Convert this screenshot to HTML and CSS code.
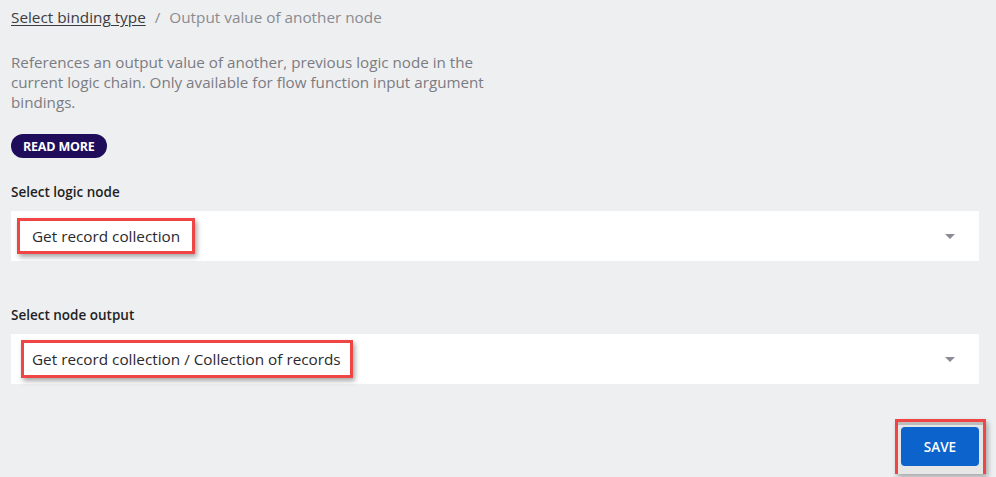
FILE: index.html
```html
<!DOCTYPE html>
<html>
<head>
<meta charset="utf-8">
<link rel="stylesheet" href="styles.css">
</head>
<body>
<div class="page">
  <nav class="breadcrumb">
    <a class="crumb-link" href="#">Select binding type</a>
    <span class="crumb-sep">/</span>
    <span class="crumb-current">Output value of another node</span>
  </nav>
  <p class="desc">References an output value of another, previous logic node in the current logic chain. Only available for flow function input argument bindings.</p>
  <button class="read-more">READ MORE</button>

  <div class="field field-first">
    <div class="label">Select logic node</div>
    <div class="select">
      <span class="mark mark-1">Get record collection</span>
      <span class="caret"></span>
    </div>
  </div>

  <div class="field field-second">
    <div class="label">Select node output</div>
    <div class="select">
      <span class="mark mark-2">Get record collection / Collection of records</span>
      <span class="caret"></span>
    </div>
  </div>

  <div class="footer">
    <span class="mark-save"><button class="save">SAVE</button></span>
  </div>
</div>
</body>
</html>
```

FILE: styles.css
```css
* { box-sizing: border-box; }
html, body {
  margin: 0;
  padding: 0;
  background: #eeeff1;
  height: 477px;
  overflow: hidden;
}
body {
  font-family: "Open Sans", Lato, sans-serif;
  color: #222;
}
.page {
  padding: 7px 17px 0 11px;
  display: flex;
  flex-direction: column;
  align-items: flex-start;
}
.breadcrumb {
  font-size: 15.3px;
  line-height: 20px;
  color: #8a8b90;
  display: flex;
  gap: 9px;
}
.crumb-link {
  color: #3b3c42;
  text-decoration: underline;
  text-underline-offset: 2px;
}
.crumb-sep { color: #8a8b90; }
.desc {
  margin: 25px 0 0;
  width: 490px;
  font-size: 15.2px;
  line-height: 20px;
  color: #7b7c82;
}
.read-more {
  margin-top: 22px;
  height: 24px;
  padding: 0 12px;
  border: none;
  border-radius: 12px;
  background: #1f0d5c;
  color: #fff;
  font-family: "Open Sans", sans-serif;
  font-weight: 700;
  font-size: 12.5px;
  letter-spacing: -0.2px;
}
.field { align-self: stretch; }
.field-first { margin-top: 25px; }
.field-second { margin-top: 45px; }
.label {
  font-size: 13.5px;
  line-height: 18px;
  font-weight: 600;
  color: #1e1f24;
}
.select {
  margin-top: 10px;
  height: 50px;
  background: #fff;
  display: flex;
  align-items: center;
  justify-content: space-between;
  padding: 0 24px 0 6px;
}
.mark {
  font-size: 15.3px;
  color: #2a2a2e;
  border: 3px solid #f04545;
  box-shadow: 2px 3px 5px rgba(0,0,0,0.35);
  line-height: 20px;
}
.mark-1 { padding: 5px 12px 5px 12px; height: 36px; display: inline-flex; align-items: center; }
.mark-2 { padding: 6px 9px 6px 8px; margin-left: 4px; }
.caret {
  width: 0;
  height: 0;
  border-left: 5px solid transparent;
  border-right: 5px solid transparent;
  border-top: 5px solid #8a8b95;
}
.footer {
  align-self: stretch;
  display: flex;
  justify-content: flex-end;
  margin-top: 35px;
  margin-right: -7px;
}
.mark-save {
  display: inline-block;
  border: 3px solid #f04545;
  border-bottom: none;
  padding: 5px 4px 8px 3px;
  background: linear-gradient(#bdbdbd 0, #bdbdbd 3px, #e6e6e6 3px);
  box-shadow: 2px 3px 5px rgba(0,0,0,0.3);
}
.save {
  display: block;
  width: 78px;
  height: 39px;
  border: none;
  border-radius: 4px;
  background: #0b63cb;
  color: #fff;
  font-family: "Open Sans", sans-serif;
  font-weight: 600;
  font-size: 13.5px;
}
```
